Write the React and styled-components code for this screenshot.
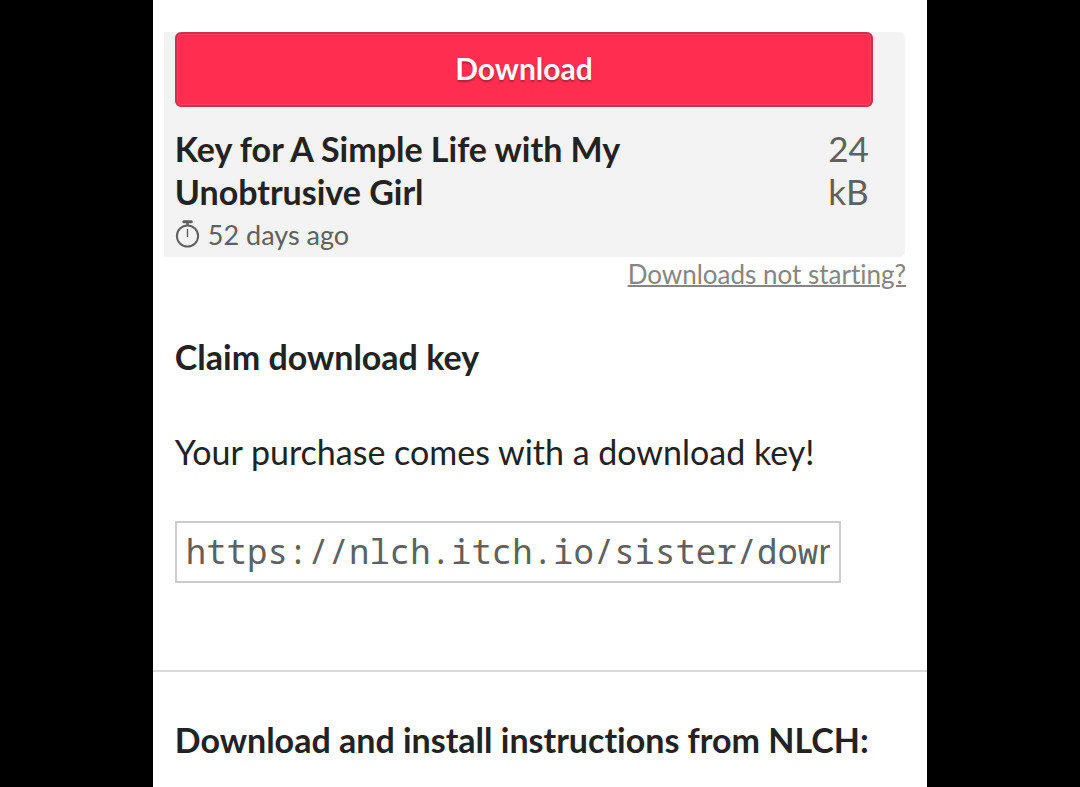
import React from "react";
import styled, { createGlobalStyle } from "styled-components";

const GlobalStyle = createGlobalStyle`
  * { box-sizing: border-box; }
  html { background: #000; }
  body {
    margin: 0;
    background: #000;
    color: #222;
    font-family: Lato, "Liberation Sans", sans-serif;
    font-size: 34px;
    line-height: 43px;
    font-variant-ligatures: none;
  }
`;

const Page = styled.main`
  width: 71.7%;
  min-height: 100vh;
  margin: 0 auto;
  padding-top: 32px;
  background: #fff;
`;

const Uploads = styled.section`
  margin: 0 22px 0 11px;
  padding: 0 32px 0 11px;
  background: #f3f3f3;
  border-radius: 0 6px 6px 0;
`;

const DownloadButton = styled.button`
  display: block;
  width: 100%;
  height: 75px;
  padding: 0 0 4px;
  border: 2px solid #d12f50;
  border-radius: 6px;
  background: #ff2e51;
  box-shadow: inset 0 0 0 1px #ff3f60;
  color: #fff;
  font: bold 30px/66px Lato, sans-serif;
  text-shadow: 0 2px 2px rgba(0, 0, 0, 0.3);
  cursor: pointer;
`;

const FileInfo = styled.div`
  display: flex;
  justify-content: space-between;
  gap: 32px;
  padding: 20px 5px 0 0;
`;

const FileName = styled.strong`
  max-width: 500px;
`;

const FileSize = styled.span`
  width: 40px;
  color: #606060;
  font-size: 35px;
`;

const UploadDate = styled.div`
  display: flex;
  align-items: center;
  gap: 8px;
  padding-bottom: 1px;
  color: #606060;
  font-size: 27px;
`;

const HelpLine = styled.p`
  margin: 0 21px 0 0;
  text-align: right;
  font-size: 26px;
  line-height: 34px;
`;

const HelpLink = styled.a`
  color: #858585;
  text-decoration-thickness: 2px;
`;

const Section = styled.section`
  padding: 0 22px;
`;

const Heading = styled.h2`
  margin: 0;
  padding-top: ${(p) => p.$top}px;
  font-size: 34px;
  line-height: 43px;
`;

const Text = styled.p`
  margin: 52px 0 48px;
`;

const KeyInput = styled.input`
  display: block;
  width: 91.2%;
  height: 62px;
  padding: 0 9px 2px;
  border: 2px solid #ccc;
  background: #fff;
  color: #606060;
  font: 34px "Noto Sans Mono", "DejaVu Sans Mono", monospace;
`;

const Divider = styled.hr`
  margin: 87px 0 0;
  border: 0;
  border-top: 2px solid #dadada;
`;

function Stopwatch() {
  return (
    <svg width="25" height="30" viewBox="0 0 25 30" fill="none" stroke="#606060" aria-hidden="true">
      <circle cx="12.5" cy="16" r="10.6" strokeWidth="2" />
      <path d="M8.8 1.7h7.4" strokeWidth="3" strokeLinecap="round" />
      <path d="M12.5 2v4" strokeWidth="2.5" />
      <path d="M12.5 9v8" strokeWidth="1.4" />
    </svg>
  );
}

export default function App() {
  return (
    <>
      <GlobalStyle />
      <Page>
        <Uploads>
          <DownloadButton>Download</DownloadButton>
          <FileInfo>
            <FileName>Key for A Simple Life with My Unobtrusive Girl</FileName>
            <FileSize>24 kB</FileSize>
          </FileInfo>
          <UploadDate><Stopwatch />52 days ago</UploadDate>
        </Uploads>
        <HelpLine><HelpLink href="#help">Downloads not starting?</HelpLink></HelpLine>
        <Section>
          <Heading $top={44}>Claim download key</Heading>
          <Text>Your purchase comes with a download key!</Text>
          <KeyInput aria-label="Download key" readOnly defaultValue="https://nlch.itch.io/sister/download/" />
        </Section>
        <Divider />
        <Section>
          <Heading $top={46}>Download and install instructions from NLCH:</Heading>
        </Section>
      </Page>
    </>
  );
}
